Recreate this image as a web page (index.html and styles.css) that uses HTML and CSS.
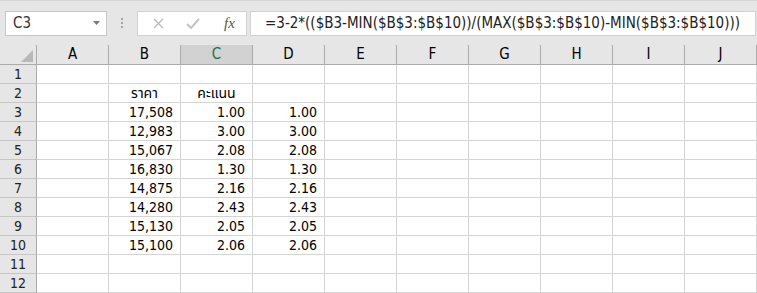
FILE: index.html
```html
<!DOCTYPE html>
<html lang="th">
<head>
    <meta charset="UTF-8">
    <title>Sheet1</title>
    <link rel="stylesheet" href="styles.css">
</head>
<body>
    <div class="toolbar">
        <div class="name-box">
            <span>C3</span>
            <svg class="drop" width="7" height="4" viewBox="0 0 7 4"><path d="M0 0h7L3.5 4z" fill="#7a7a7a"/></svg>
        </div>
        <div class="grip"><i></i><i></i><i></i></div>
        <div class="fx-buttons">
            <svg width="11" height="11" viewBox="0 0 11 11"><path d="M1 1l9 9M10 1l-9 9" stroke="#b9b9b9" stroke-width="1.3" fill="none"/></svg>
            <svg width="14" height="11" viewBox="0 0 14 11"><path d="M1 6l4 4 8-9" stroke="#c3c3c3" stroke-width="2" fill="none"/></svg>
            <span class="fx">fx</span>
        </div>
        <div class="formula">=3-2*(($B3-MIN($B$3:$B$10))/(MAX($B$3:$B$10)-MIN($B$3:$B$10)))</div>
    </div>

    <div class="sheet">
        <div class="row head">
            <div class="corner"><svg width="12" height="12" viewBox="0 0 12 12"><path d="M12 0v12H0z" fill="#b8b8b8"/></svg></div>
            <div>A</div><div>B</div><div class="sel">C</div><div>D</div><div>E</div>
            <div>F</div><div>G</div><div>H</div><div>I</div><div>J</div>
        </div>
        <div class="row">
            <div class="rh">1</div><div></div><div></div><div></div><div></div><div></div><div></div><div></div><div></div><div></div><div></div>
        </div>
        <div class="row">
            <div class="rh">2</div><div></div><div class="c">ราคา</div><div class="c">คะแนน</div><div></div><div></div><div></div><div></div><div></div><div></div><div></div>
        </div>
        <div class="row">
            <div class="rh">3</div><div></div><div class="n">17,508</div><div class="n">1.00</div><div class="n">1.00</div><div></div><div></div><div></div><div></div><div></div><div></div>
        </div>
        <div class="row">
            <div class="rh">4</div><div></div><div class="n">12,983</div><div class="n">3.00</div><div class="n">3.00</div><div></div><div></div><div></div><div></div><div></div><div></div>
        </div>
        <div class="row">
            <div class="rh">5</div><div></div><div class="n">15,067</div><div class="n">2.08</div><div class="n">2.08</div><div></div><div></div><div></div><div></div><div></div><div></div>
        </div>
        <div class="row">
            <div class="rh">6</div><div></div><div class="n">16,830</div><div class="n">1.30</div><div class="n">1.30</div><div></div><div></div><div></div><div></div><div></div><div></div>
        </div>
        <div class="row">
            <div class="rh">7</div><div></div><div class="n">14,875</div><div class="n">2.16</div><div class="n">2.16</div><div></div><div></div><div></div><div></div><div></div><div></div>
        </div>
        <div class="row">
            <div class="rh">8</div><div></div><div class="n">14,280</div><div class="n">2.43</div><div class="n">2.43</div><div></div><div></div><div></div><div></div><div></div><div></div>
        </div>
        <div class="row">
            <div class="rh">9</div><div></div><div class="n">15,130</div><div class="n">2.05</div><div class="n">2.05</div><div></div><div></div><div></div><div></div><div></div><div></div>
        </div>
        <div class="row">
            <div class="rh">10</div><div></div><div class="n">15,100</div><div class="n">2.06</div><div class="n">2.06</div><div></div><div></div><div></div><div></div><div></div><div></div>
        </div>
        <div class="row">
            <div class="rh">11</div><div></div><div></div><div></div><div></div><div></div><div></div><div></div><div></div><div></div><div></div>
        </div>
        <div class="row">
            <div class="rh">12</div><div></div><div></div><div></div><div></div><div></div><div></div><div></div><div></div><div></div><div></div>
        </div>
    </div>
</body>
</html>
```

FILE: styles.css
```css
body {
    margin: 0;
    font-family: "DejaVu Sans Condensed", "DejaVu Sans", "Noto Sans Thai", "Noto Sans", sans-serif;
    font-size: 14px;
    color: #000;
    background: #fff;
}
.toolbar {
    display: flex;
    align-items: center;
    height: 45px;
    padding-left: 5px;
    background: #e6e6e6;
    box-sizing: border-box;
    border-top: 1px solid #d6d6d6;
}
.name-box {
    display: flex;
    align-items: center;
    justify-content: space-between;
    width: 102px;
    height: 25px;
    padding: 0 6px 0 7px;
    box-sizing: border-box;
    background: #fff;
    border: 1px solid #c6c6c6;
    font-size: 15px;
    color: #333;
}
.grip {
    display: flex;
    flex-direction: column;
    gap: 2px;
    margin: 0 14px 0 14px;
}
.grip i {
    width: 2px;
    height: 2px;
    background: #a5a5a5;
}
.fx-buttons {
    display: flex;
    align-items: center;
    width: 110px;
    height: 25px;
    padding-left: 15px;
    box-sizing: border-box;
    background: #fff;
    border: 1px solid #d2d2d2;
    gap: 22px;
}
.fx {
    font-family: "Liberation Serif", serif;
    font-style: italic;
    font-size: 15px;
    color: #555;
    margin-left: 2px;
}
.formula {
    flex: 1;
    height: 25px;
    margin: 0 1px 0 3px;
    padding-left: 14px;
    box-sizing: border-box;
    line-height: 23px;
    background: #fff;
    border: 1px solid #d2d2d2;
    white-space: nowrap;
    overflow: hidden;
    font-size: 15px;
    color: #222;
}
.row {
    display: grid;
    grid-template-columns: 37px repeat(10, 72px);
    height: 19px;
}
.row > div {
    box-sizing: border-box;
    border-right: 1px solid #d4d4d4;
    border-bottom: 1px solid #d4d4d4;
    line-height: 18px;
    white-space: nowrap;
    overflow: hidden;
}
.row.head {
    height: 20px;
    background: #e6e6e6;
}
.row.head > div {
    text-align: center;
    line-height: 19px;
    font-size: 15px;
    border-right-color: #ababab;
    border-bottom-color: #ababab;
}
.row.head > .sel {
    background: #d2d2d2;
    color: #217346;
}
.corner {
    display: flex;
    align-items: flex-end;
    justify-content: flex-end;
    padding: 0 3px 2px 0;
}
.row > .rh {
    background: #e6e6e6;
    text-align: center;
    border-right-color: #ababab;
    border-bottom-color: #c6c6c6;
    color: #222;
}
.row > .n {
    text-align: right;
    padding-right: 7px;
}
.row > .c {
    text-align: center;
}
```
